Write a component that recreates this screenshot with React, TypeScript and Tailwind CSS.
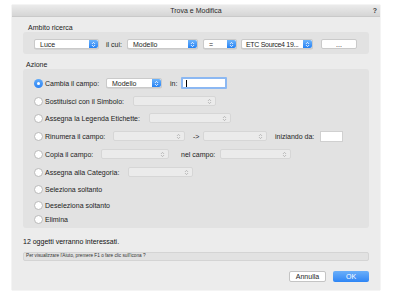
import React from 'react';

const font = "font-['Liberation_Sans',Arial,sans-serif]";

function BlueStepper() {
  return (
    <span className="flex w-[9px] shrink-0 items-center justify-center rounded-r-[2px] bg-gradient-to-b from-[#6db4fb] to-[#2181f4]">
      <svg width="5" height="7" viewBox="0 0 5 7">
        <path d="M1 2.9 L2.5 1.4 L4 2.9 M1 4.1 L2.5 5.6 L4 4.1" stroke="#fff" strokeWidth="0.9" fill="none" />
      </svg>
    </span>
  );
}

function Select({ className, value, textClass }: { className: string; value: string; textClass?: string }) {
  return (
    <div className={`flex h-[10px] items-stretch rounded-[2px] border border-[#cacaca] bg-white shadow-[0_0.5px_0.5px_rgba(0,0,0,0.12)] ${className}`}>
      <span className={`flex flex-1 items-center overflow-hidden whitespace-nowrap text-[7px] leading-none text-[#1c1c1c] ${textClass ?? 'pl-[5px]'}`}>
        {value}
      </span>
      <BlueStepper />
    </div>
  );
}

function DisabledSelect({ className }: { className: string }) {
  return (
    <div className={`flex h-[10px] items-center justify-end rounded-[2px] border border-[#d6d6d6] bg-[#ebebeb] pr-[3px] ${className}`}>
      <svg width="5" height="7" viewBox="0 0 5 7">
        <path d="M1 2.9 L2.5 1.4 L4 2.9 M1 4.1 L2.5 5.6 L4 4.1" stroke="#a9a9a9" strokeWidth="0.8" fill="none" />
      </svg>
    </div>
  );
}

function Radio({ checked }: { checked?: boolean }) {
  if (checked) {
    return (
      <span className="flex h-[9px] w-[9px] shrink-0 items-center justify-center rounded-full bg-gradient-to-b from-[#5faaf9] to-[#2a83f5]">
        <span className="h-[3px] w-[3px] rounded-full bg-white" />
      </span>
    );
  }
  return <span className="h-[9px] w-[9px] shrink-0 rounded-full border border-[#b9b9b9] bg-white" />;
}

function Row({ label, labelW, checked, className, children }: {
  label: string;
  labelW?: string;
  checked?: boolean;
  className: string;
  children?: React.ReactNode;
}) {
  return (
    <div className={`flex h-[14px] items-center ${className}`}>
      <Radio checked={checked} />
      <span className={`ml-[2px] whitespace-nowrap text-[7px] leading-none text-[#1c1c1c] ${labelW ?? ''}`}>{label}</span>
      {children}
    </div>
  );
}

export default function App() {
  return (
    <div className={`h-[301px] w-[396px] bg-white pl-[12px] pt-[5px] ${font}`}>
      <div className="flex h-[285px] w-[368px] flex-col bg-[#ececec] shadow-[0_0_1px_rgba(0,0,0,0.25)]">
        {/* barra titolo */}
        <div className="relative flex h-[12px] shrink-0 items-center justify-center border-b border-[#c9c9c9] bg-gradient-to-b from-[#ebebeb] to-[#d5d5d5]">
          <span className="text-[7px] leading-none text-[#2a2a2a]">Trova e Modifica</span>
          <span className="absolute right-[3px] top-[2px] text-[7px] font-bold leading-none text-[#444]">?</span>
        </div>

        <div className="flex flex-col px-[11px]">
          {/* Ambito ricerca */}
          <div className="mt-[7px] h-[8px] pl-[5px] text-[7px] leading-[8px] text-[#1c1c1c]">Ambito ricerca</div>
          <div className="flex h-[22px] items-start rounded-[3px] bg-[#e2e2e2] pl-[11px] pt-[7px]">
            <Select className="w-[65px]" value="Luce" />
            <span className="ml-[7px] flex h-[10px] w-[17px] items-center whitespace-nowrap text-[7px] leading-none text-[#1c1c1c]">il cui:</span>
            <Select className="ml-[4px] w-[71px]" value="Modello" />
            <Select className="ml-[5px] w-[34px]" value="=" />
            <Select className="ml-[4px] w-[72px]" value="ETC Source4 19..." textClass="pl-[4px] tracking-[-0.3px]" />
            <div className="ml-[8px] flex h-[10px] w-[36px] items-center justify-center rounded-[2px] border border-[#cacaca] bg-white text-[7px] leading-none text-[#1c1c1c]">
              ...
            </div>
          </div>

          {/* Azione */}
          <div className="mt-[7px] h-[8px] pl-[3px] text-[7px] leading-[8px] text-[#1c1c1c]">Azione</div>
          <div className="flex h-[159px] flex-col rounded-[3px] bg-[#e2e2e2] pl-[11px]">
            <Row checked label="Cambia il campo:" labelW="w-[61px]" className="mt-[7px]">
              <Select className="w-[56px]" value="Modello" />
              <span className="ml-[8px] w-[11px] text-[7px] leading-none text-[#1c1c1c]">in:</span>
              <div className="flex h-[12px] w-[46px] items-center rounded-[1px] border-[2px] border-[#8cb8f2] bg-white pl-[3px]">
                <span className="h-[7px] w-[1px] bg-black" />
              </div>
            </Row>
            <Row label="Sostituisci con il Simbolo:" labelW="w-[88px]" className="mt-[4px]">
              <DisabledSelect className="w-[83px]" />
            </Row>
            <Row label="Assegna la Legenda Etichette:" labelW="w-[104px]" className="mt-[3px]">
              <DisabledSelect className="w-[82px]" />
            </Row>
            <Row label="Rinumera il campo:" labelW="w-[68px]" className="mt-[4px]">
              <DisabledSelect className="w-[72px]" />
              <span className="ml-[8px] w-[10px] text-[7px] leading-none text-[#1c1c1c]">-&gt;</span>
              <DisabledSelect className="w-[64px]" />
              <span className="ml-[8px] w-[45px] whitespace-nowrap text-[7px] leading-none text-[#1c1c1c]">iniziando da:</span>
              <div className="h-[11px] w-[23px] border border-[#d0d0d0] bg-white" />
            </Row>
            <Row label="Copia il campo:" labelW="w-[56px]" className="mt-[4px]">
              <DisabledSelect className="w-[68px]" />
              <span className="ml-[12px] w-[39px] whitespace-nowrap text-[7px] leading-none text-[#1c1c1c]">nel campo:</span>
              <DisabledSelect className="w-[71px]" />
            </Row>
            <Row label="Assegna alla Categoria:" labelW="w-[83px]" className="mt-[4px]">
              <DisabledSelect className="w-[65px]" />
            </Row>
            <Row label="Seleziona soltanto" className="mt-[3px]" />
            <Row label="Deseleziona soltanto" className="mt-[2px]" />
            <Row label="Elimina" className="mt-0" />
          </div>

          {/* riepilogo */}
          <div className="mt-[8px] flex h-[10px] items-center text-[7px] leading-none text-[#111]">
            12 oggetti verranno interessati.
          </div>

          <div className="mt-[6px] flex h-[9px] items-center rounded-[2px] border border-[#d4d4d4] bg-[#e2e2e2] pl-[2px] text-[4.7px] leading-none text-[#333]">
            Per visualizzare l'Aiuto, premere F1 o fare clic sull'icona ?
          </div>

          <div className="mt-[10px] flex justify-end gap-[7px]">
            <button className="flex h-[11px] w-[37px] items-center justify-center rounded-[2px] border border-[#c4c4c4] bg-white text-[7px] leading-none text-[#1c1c1c]">
              Annulla
            </button>
            <button className="flex h-[11px] w-[36px] items-center justify-center rounded-[2px] bg-gradient-to-b from-[#6aaff9] to-[#2d85f5] text-[7px] leading-none text-white">
              OK
            </button>
          </div>
        </div>
      </div>
    </div>
  );
}
